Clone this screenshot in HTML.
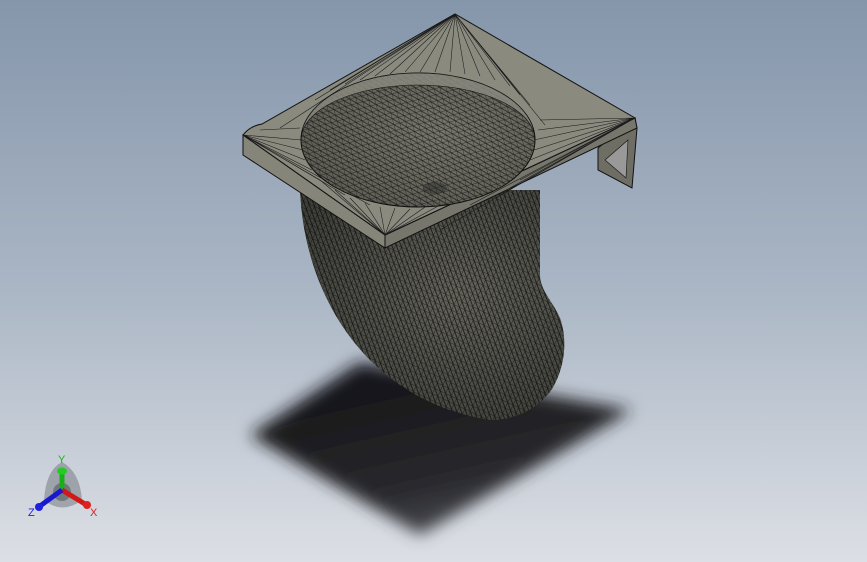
<!DOCTYPE html>
<html><head><meta charset="utf-8"><style>
html,body{margin:0;padding:0;width:867px;height:562px;overflow:hidden}
</style></head><body>
<svg width="867" height="562" viewBox="0 0 867 562" xmlns="http://www.w3.org/2000/svg">
<defs>
<linearGradient id="bg" x1="0" y1="0" x2="0" y2="1">
<stop offset="0" stop-color="#8596ab"/><stop offset="0.5" stop-color="#a9b5c4"/><stop offset="1" stop-color="#dcdfe5"/>
</linearGradient>
<linearGradient id="sh" x1="0.3" y1="0.2" x2="0.7" y2="1">
<stop offset="0" stop-color="#18181a"/><stop offset="0.6" stop-color="#2a2a2e"/><stop offset="1" stop-color="#55585e"/>
</linearGradient>
<filter id="blur"><feGaussianBlur stdDeviation="8"/></filter>
<pattern id="mesh" width="6" height="6" patternUnits="userSpaceOnUse" patternTransform="rotate(25)">
<rect width="6" height="6" fill="#6a6a62"/>
<path d="M0 0L6 6M0 0H6M0 0V6" stroke="#1c1c18" stroke-width="0.8"/>
</pattern>
<pattern id="mesh2" width="6" height="6" patternUnits="userSpaceOnUse" patternTransform="rotate(-15)">
<rect width="6" height="6" fill="#7a7a70"/>
<path d="M0 0L6 6M0 0H6M0 0V6" stroke="#22221c" stroke-width="0.7"/>
</pattern>
<radialGradient id="bodyShade" cx="0.6" cy="0.45" r="0.65">
<stop offset="0" stop-color="#000" stop-opacity="0.05"/><stop offset="1" stop-color="#000" stop-opacity="0.4"/>
</radialGradient>
</defs>
<rect width="867" height="562" fill="url(#bg)"/>
<path d="M250 435 L360 362 L632 410 L420 535 Z" fill="url(#sh)" filter="url(#blur)"/>
<path d="M300 190 C303 260 330 320 370 360 C400 390 440 412 490 420 C515 420 535 410 550 392 C565 370 568 340 560 318 C552 300 540 290 540 275 L540 190 Z" fill="url(#mesh)"/>
<path d="M300 190 C303 260 330 320 370 360 C400 390 440 412 490 420 C515 420 535 410 550 392 C565 370 568 340 560 318 C552 300 540 290 540 275 L540 190 Z" fill="url(#bodyShade)"/>
<path d="M598 148 L635 118 L637 128 L632 188 L598 170 Z" fill="#6e6e65" stroke="#111" stroke-width="1"/>
<path d="M605 160 L628 140 L626 178 Z" fill="#999" stroke="#111" stroke-width="0.6"/>
<path d="M243 135 L243 155 L385 248 L385 235 Z" fill="#85857a" stroke="#111" stroke-width="1"/>
<path d="M385 235 L385 248 L637 128 L635 118 Z" fill="#76766c" stroke="#111" stroke-width="1"/>
<path d="M243 135 Q250 126 262 124 L455 14 L635 118 L385 235 Z" fill="#8a8a7f" stroke="#111" stroke-width="1"/>
<g stroke="#1a1a1a" stroke-width="0.55" fill="none">
<path d="M455 14 L300 115 M455 14 L315 100 M455 14 L330 90 M455 14 L345 84 M455 14 L360 80 M455 14 L375 76 M455 14 L390 74 M455 14 L405 72 M455 14 L420 72 M455 14 L435 72 M455 14 L450 72 M455 14 L465 74 M455 14 L480 76 M455 14 L495 80 M455 14 L510 86 M455 14 L520 95 M455 14 L530 105 M455 14 L545 125 M455 14 L262 124 M455 14 L280 128"/>
<path d="M635 118 L534 140 M635 118 L534 150 M635 118 L530 160 M635 118 L525 170 M635 118 L520 180 M635 118 L510 188 M635 118 L500 195 M635 118 L470 205 M635 118 L440 230 M635 118 L540 120 M635 118 L538 130"/>
<path d="M243 135 L302 140 M243 135 L303 150 M243 135 L305 160 M243 135 L312 170 M243 135 L320 180 M243 135 L345 195 M243 135 L370 205 M260 130 L300 128"/>
<path d="M385 235 L320 180 M385 235 L335 190 M385 235 L350 198 M385 235 L365 203 M385 235 L380 207 M385 235 L395 208 M385 235 L410 209 M385 235 L425 207 M385 235 L440 205"/>
</g>
<ellipse cx="418" cy="140" rx="117" ry="67" fill="url(#mesh2)" stroke="#111" stroke-width="1"/>
<ellipse cx="418" cy="140" rx="117" ry="67" fill="url(#bodyShade)" opacity="0.6"/>
<path d="M301 140 A117 67 0 0 1 535 140 A117 55 0 0 0 301 140 Z" fill="#8a8a7f" opacity="0.85"/>
<path d="M301 140 A117 67 0 0 1 535 140 A117 55 0 0 0 301 140 Z" fill="none" stroke="#111" stroke-width="0.6"/>
<ellipse cx="435" cy="188" rx="12" ry="6" fill="#222" opacity="0.4"/>
<g>
<path d="M44 500 Q46 470 62 462 Q80 472 82 500 Q62 515 44 500 Z" fill="#7e8288" opacity="0.6"/>
<circle cx="62" cy="492" r="9" fill="#555a60" opacity="0.6"/>
<line x1="62" y1="490" x2="62" y2="472" stroke="#18b018" stroke-width="5"/>
<ellipse cx="62" cy="471" rx="5" ry="3.5" fill="#22cc22"/>
<line x1="62" y1="490" x2="85" y2="504" stroke="#d01818" stroke-width="5"/>
<circle cx="87" cy="505" r="4" fill="#e02020"/>
<line x1="62" y1="490" x2="40" y2="506" stroke="#1818d0" stroke-width="5"/>
<circle cx="39" cy="507" r="4" fill="#2020e0"/>
<text x="58" y="463" font-family="Liberation Sans, sans-serif" font-size="11" fill="#20b020">Y</text>
<text x="90" y="516" font-family="Liberation Sans, sans-serif" font-size="11" fill="#e02020">X</text>
<text x="28" y="516" font-family="Liberation Sans, sans-serif" font-size="11" fill="#2020e0">Z</text>
</g>
</svg>
</body></html>
